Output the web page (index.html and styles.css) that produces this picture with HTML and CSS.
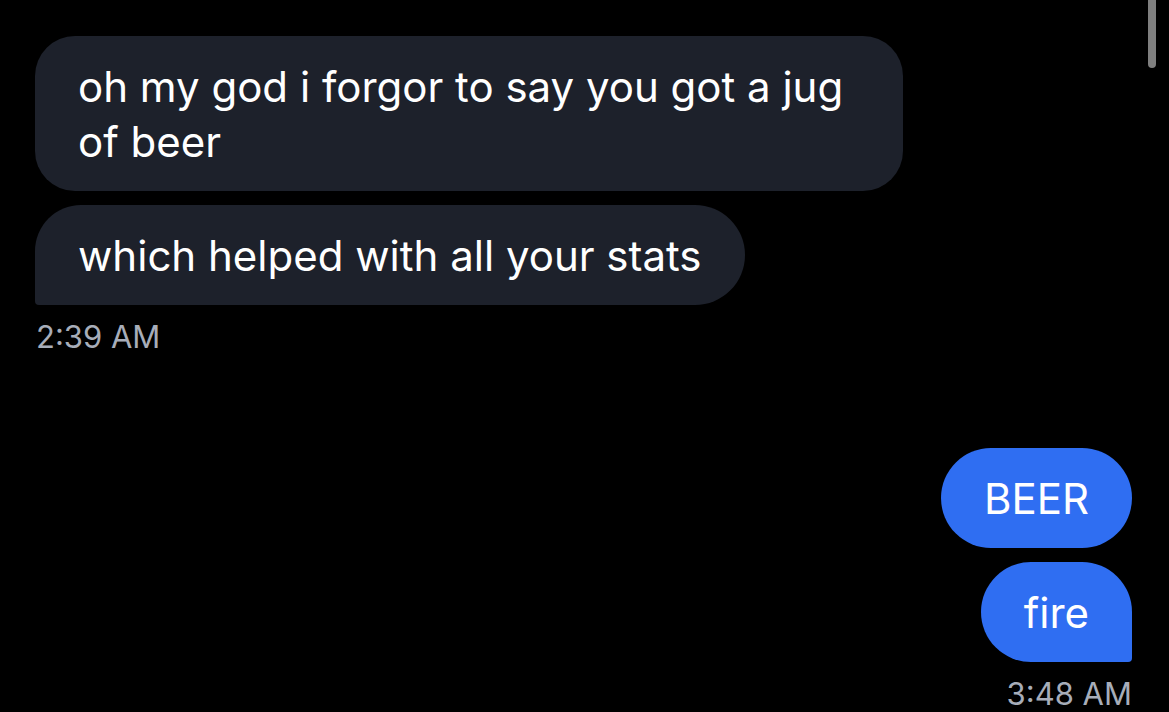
FILE: index.html
```html
<!DOCTYPE html>
<html lang="en">
<head>
<meta charset="utf-8">
<title>Chat</title>
<link rel="stylesheet" href="styles.css">
</head>
<body>
<div class="chat">
  <div class="group group-in">
    <div class="bubble bubble-in bubble-first">oh my god i forgor to say you got a jug of beer</div>
    <div class="bubble bubble-in bubble-last">which helped with all your stats</div>
    <div class="time">2:39 AM</div>
  </div>
  <div class="group group-out">
    <div class="bubble bubble-out bubble-pill">BEER</div>
    <div class="bubble bubble-out bubble-last-out">fire</div>
    <div class="time">3:48 AM</div>
  </div>
</div>
<div class="scrollbar"></div>
</body>
</html>
```

FILE: styles.css
```css
html, body {
  margin: 0;
  padding: 0;
  background: #000;
  height: 100%;
  overflow: hidden;
}

body {
  font-family: Inter, "Noto Sans", sans-serif;
  color: #fff;
}

.chat {
  display: flex;
  flex-direction: column;
  padding: 36px 37px 0 35px;
}

.group {
  display: flex;
  flex-direction: column;
  gap: 14px;
}

.group-in {
  align-items: flex-start;
}

.group-out {
  align-items: flex-end;
  margin-top: 93px;
}

.bubble {
  box-sizing: border-box;
  max-width: 868px;
  padding: 22.5px 43px;
  font-size: 42px;
  line-height: 55px;
  font-weight: 400;
  border-radius: 40px;
}

.bubble-in {
  background: #1d212b;
}

.bubble-out {
  background: #2f6ef2;
  border-radius: 50px;
}

.bubble-last {
  border-radius: 46px 50px 50px 4px;
}

.bubble-last-out {
  border-radius: 50px 50px 4px 50px;
}

.time {
  font-size: 31px;
  line-height: 37px;
  color: #a7adb9;
  margin-top: -1px;
  padding-left: 1px;
}

.scrollbar {
  position: absolute;
  top: 0;
  right: 13px;
  width: 8px;
  height: 68px;
  background: #7f7f7f;
  border-radius: 0 0 4px 4px;
}
```
